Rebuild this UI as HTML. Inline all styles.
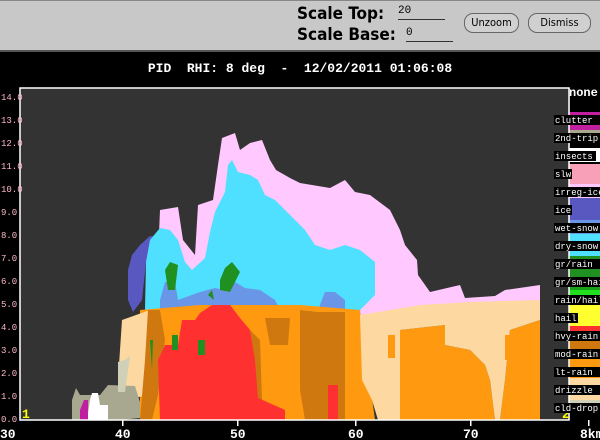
<!DOCTYPE html>
<html><head><meta charset="utf-8"><style>
*{margin:0;padding:0}
body{width:600px;height:440px;background:#000;position:relative;overflow:hidden;font-family:"Liberation Sans",sans-serif}
.top{position:absolute;left:0;top:0;width:600px;height:52px;background:#c8c8c8;border-top:1px solid #888;border-bottom:2px solid #555;box-sizing:border-box}
.lbl{position:absolute;font-weight:bold;font-size:17px;color:#000;font-family:"DejaVu Sans Condensed","DejaVu Sans",sans-serif}
.inp{position:absolute;font-size:11px;font-family:"Liberation Mono",monospace;border-bottom:1px solid #333;height:13px;line-height:11px}
.btn{position:absolute;border:1px solid #666;border-radius:9px;font-size:11px;font-family:"DejaVu Sans Condensed","DejaVu Sans",sans-serif;text-align:center;line-height:18px;height:18px;background:#d0d0d0}
.t{position:absolute;color:#fff;font-weight:bold;font-family:"Liberation Mono",monospace;white-space:pre}
</style></head><body>
<div class="top">
<div class="lbl" style="left:297px;top:3px">Scale Top:</div>
<div class="lbl" style="left:297px;top:24px">Scale Base:</div>
<div class="inp" style="left:398px;top:5px;width:47px">20</div>
<div class="inp" style="left:406px;top:27px;width:47px">0</div>
<div class="btn" style="left:464px;top:12px;width:53px">Unzoom</div>
<div class="btn" style="left:528px;top:12px;width:61px">Dismiss</div>
</div>
<div class="t" style="left:0;width:600px;top:61px;text-align:center;font-size:13px">PID  RHI: 8 deg  -  12/02/2011 01:06:08</div>
<svg width="600" height="440" style="position:absolute;left:0;top:0">
<rect x="20" y="88" width="550" height="332" fill="#333"/>
<g>
<rect x="569" y="112" width="31" height="18" fill="#c020a0"/>
<rect x="569" y="130" width="31" height="8" fill="#a8a890"/>
<rect x="569" y="148" width="31" height="14" fill="#fff"/>
<rect x="569" y="164" width="31" height="20" fill="#f8a0b8"/>
<rect x="569" y="184" width="31" height="14" fill="#ffc8ff"/>
<rect x="569" y="198" width="31" height="22" fill="#5858c0"/>
<rect x="569" y="220" width="31" height="14" fill="#6a96e8"/>
<rect x="569" y="234" width="31" height="22" fill="#50e0ff"/>
<rect x="569" y="256" width="31" height="22" fill="#209020"/>
<rect x="569" y="278" width="31" height="12" fill="#18a018"/>
<rect x="569" y="290" width="31" height="10" fill="#20e020"/>
<rect x="569" y="300" width="31" height="26" fill="#ffff30"/>
<rect x="569" y="326" width="31" height="10" fill="#ff3030"/>
<rect x="569" y="336" width="31" height="20" fill="#d07810"/>
<rect x="569" y="356" width="31" height="22" fill="#ff9a10"/>
<rect x="569" y="378" width="31" height="22" fill="#fdd8a0"/>
<rect x="569" y="400" width="31" height="10" fill="#d0d0b8"/>
</g>
<path fill="#ffc8ff" d="M155,330 L160,210 L178,207 L183,240 L195,255 L198,205 L213,200 L218,165 L222,138 L235,133 L240,150 L250,143 L262,140 L270,160 L276,170 L290,178 L300,183 L330,188 L345,180 L355,192 L370,195 L390,210 L400,230 L405,245 L417,260 L418,275 L430,292 L460,285 L465,298 L495,296 L505,290 L540,285 L540,312 L300,330 Z"/>
<path fill="#5858c0" d="M128,270 L132,255 L140,245 L150,236 L158,237 L152,252 L146,262 L142,300 L133,312 L128,300 Z"/>
<path fill="#50e0ff" d="M145,310 L146,262 L150,240 L160,228 L170,230 L178,240 L185,262 L192,270 L205,258 L210,232 L215,212 L225,192 L228,165 L232,160 L238,172 L250,175 L258,180 L265,195 L275,200 L290,215 L305,230 L315,245 L330,250 L345,245 L360,250 L375,262 L375,295 L360,310 L340,312 L300,318 L200,318 Z"/>
<path fill="#6a96e8" d="M160,300 L165,282 L175,282 L178,300 L200,292 L215,288 L225,290 L235,282 L245,288 L260,290 L275,300 L280,310 L210,315 L160,320 Z M318,310 L325,292 L335,292 L345,300 L345,312 Z"/>
<path fill="#209020" d="M165,270 L170,262 L178,265 L175,290 L168,290 Z M220,280 L225,268 L232,262 L240,272 L230,292 L220,290 Z M208,295 L212,290 L214,300 Z"/>
<path fill="#ff9a10" d="M140,310 L200,305 L300,305 L360,310 L375,420 L140,420 Z M400,330 L445,325 L445,345 L470,350 L485,365 L490,380 L495,420 L400,420 Z M510,330 L540,320 L540,420 L500,420 L505,380 Z"/>
<path fill="#fdd8a0" d="M360,315 L420,305 L470,302 L540,300 L540,320 L510,330 L505,380 L500,420 L495,420 L490,380 L485,365 L470,350 L445,345 L445,325 L400,330 L400,420 L378,420 L372,400 L362,380 Z M122,320 L150,310 L148,395 L125,400 L118,380 Z"/>
<path fill="#ff9a10" d="M388,335 L395,335 L395,358 L388,358 Z M505,335 L512,335 L512,360 L505,360 Z"/>
<path fill="#d07810" d="M148,310 L160,310 L165,340 L158,395 L152,420 L140,420 L145,360 Z M195,330 L210,330 L210,420 L195,420 Z M240,320 L250,330 L260,340 L262,400 L285,415 L260,420 L248,420 Z M300,310 L318,312 L345,312 L345,420 L305,420 L300,390 Z M265,318 L290,318 L288,345 L270,345 Z"/>
<path fill="#ff3030" d="M200,313 L212,305 L230,305 L240,318 L250,330 L255,360 L258,398 L285,410 L285,420 L160,420 L158,360 L165,345 L178,345 L182,320 L195,320 Z M328,385 L338,385 L338,420 L328,420 Z"/>
<path fill="#209020" d="M172,335 L178,335 L178,350 L172,350 Z M198,340 L205,340 L205,355 L198,355 Z M150,340 L153,340 L152,370 Z"/>
<path fill="#a8a890" d="M72,400 L76,388 L80,395 L100,395 L108,385 L135,386 L140,402 L140,418 L120,420 L72,420 Z"/>
<path fill="#d0d0b8" d="M118,362 L125,360 L130,356 L125,392 L118,392 Z"/>
<path fill="#fff" d="M90,400 L92,393 L98,393 L100,405 L108,405 L108,420 L87,420 Z"/>
<path fill="#c020a0" d="M80,410 L84,400 L88,400 L88,420 L80,420 Z"/>
<rect x="20" y="88" width="549" height="332" fill="none" stroke="#fff" stroke-width="1.5"/>
<g fill="#fff"><rect x="122" y="420" width="1.5" height="6"/><rect x="237" y="420" width="1.5" height="6"/><rect x="355" y="420" width="1.5" height="6"/><rect x="470" y="420" width="1.5" height="6"/><rect x="588" y="420" width="1.5" height="6"/></g>
<g fill="#ffb8c8" font-family="Liberation Mono,monospace" font-size="9">
<text x="1" y="100">14.0</text><text x="1" y="123">13.0</text><text x="1" y="146">12.0</text><text x="1" y="169">11.0</text><text x="1" y="192">10.0</text><text x="1" y="215">9.0</text><text x="1" y="238">8.0</text><text x="1" y="261">7.0</text><text x="1" y="284">6.0</text><text x="1" y="307">5.0</text><text x="1" y="330">4.0</text><text x="1" y="353">3.0</text><text x="1" y="376">2.0</text><text x="1" y="399">1.0</text><text x="1" y="422">0.0</text>
</g>
<g fill="#fff" font-family="Liberation Mono,monospace" font-size="13" font-weight="bold">
<text x="0" y="438">30</text><text x="115" y="438">40</text><text x="230" y="438">50</text><text x="348" y="438">60</text><text x="463" y="438">70</text><text x="580" y="438">8km</text>
<text x="569" y="96" font-size="12">none</text>
</g>
<g fill="#ff0" font-family="Liberation Mono,monospace" font-size="13" font-weight="bold"><text x="22" y="418">1</text><text x="562" y="418">2</text></g>
<g font-family="Liberation Mono,monospace" font-size="9" fill="#fff">
<rect x="554" y="115" width="46" height="10" fill="#000"/><text x="555" y="123">clutter</text>
<rect x="554" y="133" width="46" height="10" fill="#000"/><text x="555" y="141">2nd-trip</text>
<rect x="554" y="151" width="42" height="10" fill="#000"/><text x="555" y="159">insects</text>
<rect x="554" y="169" width="18" height="10" fill="#000"/><text x="555" y="177">slw</text>
<rect x="554" y="187" width="46" height="10" fill="#000"/><text x="555" y="195">irreg-ice</text>
<rect x="554" y="205" width="18" height="10" fill="#000"/><text x="555" y="213">ice</text>
<rect x="554" y="223" width="46" height="10" fill="#000"/><text x="555" y="231">wet-snow</text>
<rect x="554" y="241" width="46" height="10" fill="#000"/><text x="555" y="249">dry-snow</text>
<rect x="554" y="259" width="46" height="10" fill="#000"/><text x="555" y="267">gr/rain</text>
<rect x="554" y="277" width="46" height="10" fill="#000"/><text x="555" y="285">gr/sm-hail</text>
<rect x="554" y="295" width="46" height="10" fill="#000"/><text x="555" y="303">rain/hail</text>
<rect x="554" y="313" width="24" height="10" fill="#000"/><text x="555" y="321">hail</text>
<rect x="554" y="331" width="46" height="10" fill="#000"/><text x="555" y="339">hvy-rain</text>
<rect x="554" y="349" width="46" height="10" fill="#000"/><text x="555" y="357">mod-rain</text>
<rect x="554" y="367" width="46" height="10" fill="#000"/><text x="555" y="375">lt-rain</text>
<rect x="554" y="385" width="46" height="10" fill="#000"/><text x="555" y="393">drizzle</text>
<rect x="554" y="403" width="46" height="10" fill="#000"/><text x="555" y="411">cld-drop</text>
</g>
</svg>
</body></html>
